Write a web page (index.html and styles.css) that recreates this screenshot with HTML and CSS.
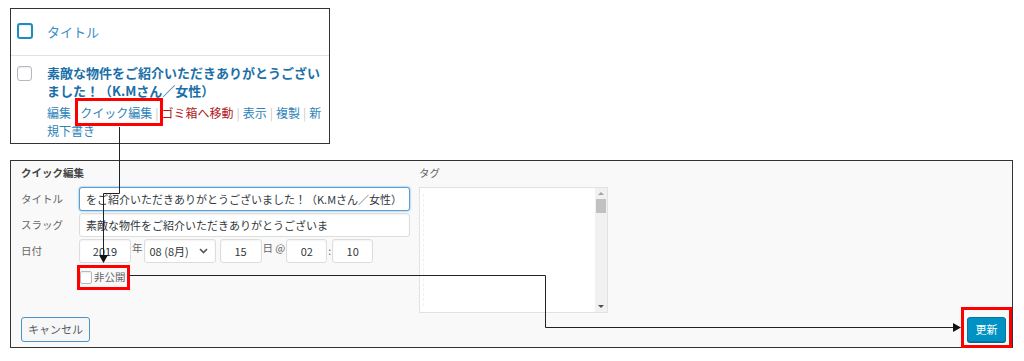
FILE: index.html
```html
<!DOCTYPE html>
<html lang="ja">
<head>
  <meta charset="UTF-8" />
  <meta name="viewport" content="width=device-width, initial-scale=1.0" />
  <title>クイック編集</title>
  <link rel="stylesheet" href="styles.css">
</head>
<body>
  <!-- Post list row -->
  <div class="list-box">
    <div class="list-head">
      <span class="check check-head"></span>
      <span class="head-title">タイトル</span>
    </div>
    <div class="list-row">
      <span class="check"></span>
      <div class="row-body">
        <div class="post-title">素敵な物件をご紹介いただきありがとうございました！（K.Mさん／女性）</div>
        <div class="row-actions">
          <span class="link">編集</span><span class="sep">|</span><span class="link mark mark-quick">クイック編集</span><span class="sep">|</span><span class="link trash">ゴミ箱へ移動</span><span class="sep">|</span><span class="link">表示</span><span class="sep">|</span><span class="link">複製</span><span class="sep">|</span><span class="link">新</span><span class="link">規下書き</span>
        </div>
      </div>
    </div>
  </div>

  <!-- Quick edit panel -->
  <div class="quick-edit">
    <div class="qe-cols">
      <div class="qe-left">
        <div class="qe-heading">クイック編集</div>
        <div class="field">
          <span class="field-label">タイトル</span>
          <div class="text-input focus">をご紹介いただきありがとうございました！（K.Mさん／女性）</div>
        </div>
        <div class="field">
          <span class="field-label">スラッグ</span>
          <div class="text-input">素敵な物件をご紹介いただきありがとうございま</div>
        </div>
        <div class="field">
          <span class="field-label">日付</span>
          <div class="date-row">
            <div class="text-input small year">2019</div>
            <span class="unit">年</span>
            <div class="text-input select">
              <span>08 (8月)</span>
              <svg class="chevron" width="9" height="6" viewBox="0 0 9 6"><path d="M1 1l3.5 3.5L8 1" fill="none" stroke="#555" stroke-width="1.6"/></svg>
            </div>
            <div class="text-input small day">15</div>
            <span class="unit">日 @</span>
            <div class="text-input small hour">02</div>
            <span class="unit colon">:</span>
            <div class="text-input small hour">10</div>
          </div>
        </div>
        <div class="private-row">
          <span class="private mark mark-private">
            <span class="check check-small"></span>
            <span class="private-text">非公開</span>
          </span>
        </div>
      </div>
      <div class="qe-right">
        <div class="qe-heading light">タグ</div>
        <div class="tag-box">
          <div class="tag-area"></div>
          <div class="scroll">
            <span class="arrow up"></span>
            <span class="thumb"></span>
            <span class="track"></span>
            <span class="arrow down"></span>
          </div>
        </div>
      </div>
    </div>
    <div class="qe-actions">
      <span class="btn">キャンセル</span>
      <span class="btn btn-primary mark mark-update">更新</span>
    </div>
  </div>

  <!-- Connector lines -->
  <svg class="connectors" width="1024" height="361" viewBox="0 0 1024 361">
    <path d="M119.5 127V193.5H103.5V256" fill="none" stroke="#222" stroke-width="1"/>
    <polygon points="99,255 108,255 103.5,263" fill="#111"/>
    <path d="M129 275.5H545.5V327.5H953" fill="none" stroke="#222" stroke-width="1"/>
    <polygon points="953,323 953,332 961,327.5" fill="#111"/>
  </svg>
</body>
</html>
```

FILE: styles.css
```css
body {
  margin: 0;
  padding: 8px 0 0 10px;
  background-color: #fff;
  font-family: "Noto Sans CJK JP", "Noto Sans", sans-serif;
  color: #444;
}
.list-box {
  width: 318px;
  height: 134px;
  border: 1px solid #333;
  background-color: #fff;
}
.list-head {
  display: flex;
  align-items: center;
  height: 44px;
  padding: 0 0 2px 6px;
  border-bottom: 1px solid #e1e1e1;
}
.check {
  display: inline-block;
  flex: none;
  width: 14px;
  height: 14px;
  border: 1px solid #b4b9be;
  border-radius: 3px;
  background-color: #fff;
  box-sizing: border-box;
  box-shadow: inset 0 1px 2px rgba(0, 0, 0, 0.08);
}
.check-head {
  width: 16px;
  height: 16px;
  border: 2px solid #1e8cbe;
}
.head-title {
  margin-left: 14px;
  font-size: 13px;
  color: #3a8fc5;
}
.list-row {
  display: flex;
  padding: 8px 0 0 6px;
}
.list-row .check {
  margin-top: 2px;
  width: 15px;
  height: 15px;
}
.row-body {
  margin-left: 15px;
  width: 278px;
}
.post-title {
  font-size: 13px;
  font-weight: bold;
  line-height: 18px;
  color: #1a6fa8;
}
.row-actions {
  margin-top: 4px;
  font-size: 12px;
  line-height: 18px;
  color: #2d83b8;
}
.sep {
  color: #c8c8c8;
  margin: 0 3px;
}
.trash {
  color: #b0191b;
}
.mark {
  position: relative;
}
.mark::after {
  content: "";
  position: absolute;
  border: 3px solid #ff0000;
}
.mark-quick::after {
  top: -6px;
  bottom: -5px;
  left: -5px;
  right: -11px;
}

/* quick edit panel */
.quick-edit {
  box-sizing: border-box;
  width: 1003px;
  height: 188px;
  margin-top: 16px;
  padding: 4px 6px 5px 10px;
  border: 1px solid #333;
  background-color: #f9f9f9;
  display: flex;
  flex-direction: column;
  justify-content: space-between;
}
.qe-cols {
  display: flex;
  gap: 9px;
}
.qe-left {
  width: 389px;
}
.qe-heading {
  font-size: 10.5px;
  font-weight: bold;
  line-height: 15px;
  color: #444;
  margin-bottom: 7px;
}
.qe-heading.light {
  font-weight: normal;
  color: #666;
}
.field {
  display: flex;
  align-items: flex-start;
  margin-bottom: 2px;
}
.field-label {
  width: 58px;
  font-size: 10.5px;
  line-height: 24px;
  color: #666;
}
.text-input {
  box-sizing: border-box;
  width: 331px;
  height: 24px;
  padding: 0 6px;
  border: 1px solid #ddd;
  border-radius: 3px;
  background-color: #fff;
  font-size: 11px;
  line-height: 22px;
  color: #32373c;
  white-space: nowrap;
  overflow: hidden;
  box-shadow: inset 0 1px 2px rgba(0, 0, 0, 0.05);
}
.text-input.focus {
  border-color: #5b9dd9;
  box-shadow: 0 0 2px rgba(30, 140, 190, 0.8);
}
.date-row {
  display: flex;
  align-items: flex-start;
}
.text-input.small {
  text-align: center;
  padding: 0;
}
.text-input.year {
  width: 52px;
}
.text-input.day {
  width: 42px;
  margin-left: 4px;
}
.text-input.hour {
  width: 41px;
}
.text-input.select {
  width: 72px;
  display: flex;
  align-items: center;
  justify-content: space-between;
  padding: 0 7px 0 5px;
}
.unit {
  font-size: 10.5px;
  line-height: 18px;
  color: #666;
  margin: 0 1px;
}
.unit.colon {
  margin: 0 1px;
  line-height: 24px;
}
.private-row {
  display: flex;
  padding: 5px 0 0 59px;
}
.private {
  display: inline-flex;
  align-items: center;
  height: 14px;
}
.check-small {
  width: 12px;
  height: 13px;
  border-radius: 2px;
}
.private-text {
  margin-left: 2px;
  font-size: 10.5px;
  line-height: 14px;
  color: #666;
}
.mark-private::after {
  top: -5px;
  bottom: -6px;
  left: -3px;
  right: -4px;
}
.tag-box {
  display: flex;
  width: 189px;
  height: 126px;
  box-sizing: border-box;
  border: 1px solid #e2e2e2;
  background-color: #fff;
}
.tag-area {
  flex: 1;
  margin: 6px 0 6px 3px;
  border-left: 1px dashed #f0f0f0;
}
.scroll {
  width: 12px;
  display: flex;
  flex-direction: column;
  align-items: center;
  background-color: #f1f1f1;
}
.arrow {
  width: 0;
  height: 0;
  border-left: 3px solid transparent;
  border-right: 3px solid transparent;
}
.arrow.up {
  margin-top: 4px;
  border-bottom: 3px solid #a3a3a3;
}
.arrow.down {
  margin-bottom: 4px;
  border-top: 3px solid #505050;
}
.thumb {
  margin-top: 4px;
  width: 10px;
  height: 14px;
  background-color: #c1c1c1;
}
.track {
  flex: 1;
}
.qe-actions {
  display: flex;
  justify-content: space-between;
  align-items: flex-end;
}
.btn {
  display: inline-block;
  box-sizing: border-box;
  height: 25px;
  padding: 0 6px;
  border: 1px solid #4a95c5;
  border-radius: 3px;
  background-color: #f7f7f7;
  font-size: 11px;
  line-height: 23px;
  color: #555d66;
}
.btn-primary {
  width: 39px;
  padding: 0;
  text-align: center;
  background-color: #0092c2;
  border-color: #0079a8;
  color: #fff;
  box-shadow: 0 1px 0 #006799;
}
.mark-update::after {
  top: -11px;
  bottom: -7px;
  left: -7px;
  right: -7px;
}
.connectors {
  position: absolute;
  top: 0;
  left: 0;
  pointer-events: none;
}
```
